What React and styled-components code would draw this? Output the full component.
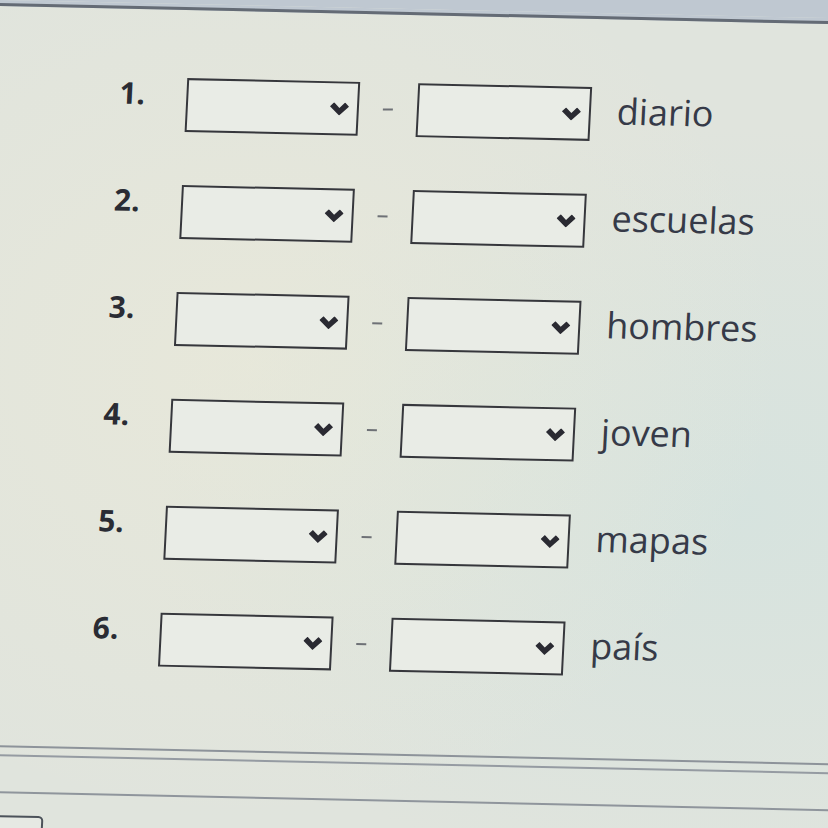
import React from 'react';
import styled, { createGlobalStyle } from 'styled-components';

const GlobalStyle = createGlobalStyle`
  html, body {
    margin: 0;
    padding: 0;
    background: #dfe3dc;
  }
`;

const items = [
  { n: 1, word: 'diario' },
  { n: 2, word: 'escuelas' },
  { n: 3, word: 'hombres' },
  { n: 4, word: 'joven' },
  { n: 5, word: 'mapas' },
  { n: 6, word: 'país' },
];

const Page = styled.div`
  width: 828px;
  height: 828px;
  overflow: hidden;
  background: linear-gradient(180deg, #bfc8d1 0px, #bfc8d1 30px, #dfe3dc 30px);
  font-family: 'Open Sans', 'Noto Sans', sans-serif;
`;

/* the photo is taken a little crooked */
const Tilt = styled.div`
  width: 900px;
  height: 900px;
  transform-origin: 0 0;
  transform: rotate(1.25deg) skewX(-1.6deg);
  background:
    radial-gradient(ellipse at 30% 40%, rgba(240, 236, 214, 0.45), transparent 60%),
    radial-gradient(ellipse at 85% 55%, rgba(205, 226, 224, 0.5), transparent 55%),
    #e0e4dd;
`;

const TopBar = styled.div`
  height: 3px;
  background: #bfc8d1;
  border-bottom: 3px solid #646b75;
`;

const List = styled.div`
  display: flex;
  flex-direction: column;
  gap: 53px;
  padding: 68px 0 0 119px;
`;

const Row = styled.div`
  display: flex;
  align-items: flex-start;
`;

const Num = styled.div`
  width: 67px;
  margin: 1px 0 0 5px;
  font-size: 30px;
  font-weight: 700;
  line-height: 1;
  color: #2a2c34;
`;

const Select = styled.div`
  box-sizing: border-box;
  width: ${(p) => p.$w}px;
  height: 54px;
  border: 2px solid #36373c;
  background: #e9ece6;
  display: flex;
  align-items: center;
  justify-content: flex-end;
  padding-right: 8px;
`;

const Dash = styled.div`
  width: 10px;
  height: 2px;
  margin: 0 24px;
  align-self: center;
  background: #6e7176;
`;

const Word = styled.div`
  align-self: center;
  margin: 0 0 6px 26px;
  font-size: 36px;
  line-height: 1;
  color: #363a48;
`;

const Footer = styled.div`
  margin-top: 82px;
`;

const Divider = styled.div`
  height: 7px;
  border-top: 2px solid #8d939a;
  border-bottom: 2px solid #959ba2;
`;

const Strip = styled.div`
  height: 35px;
  border-bottom: 2px solid #8f959c;
`;

const Button = styled.div`
  width: 80px;
  height: 40px;
  margin-top: 22px;
  border: 2px solid #4c525a;
  border-radius: 5px;
  background: #e6e9e3;
`;

const Chevron = () => (
  <svg width="19" height="13" viewBox="0 0 19 13">
    <polygon points="0,4 4,0 9.5,5.5 15,0 19,4 9.5,13" fill="#2a2a32" />
  </svg>
);

const Dropdown = ({ w }) => (
  <Select $w={w}>
    <Chevron />
  </Select>
);

export default function App() {
  return (
    <Page>
      <GlobalStyle />
      <Tilt>
        <TopBar />
        <List>
          {items.map((it) => (
            <Row key={it.n}>
              <Num>{it.n}.</Num>
              <Dropdown w={173} />
              <Dash />
              <Dropdown w={174} />
              <Word>{it.word}</Word>
            </Row>
          ))}
        </List>
        <Footer>
          <Divider />
          <Strip />
          <Button />
        </Footer>
      </Tilt>
    </Page>
  );
}
